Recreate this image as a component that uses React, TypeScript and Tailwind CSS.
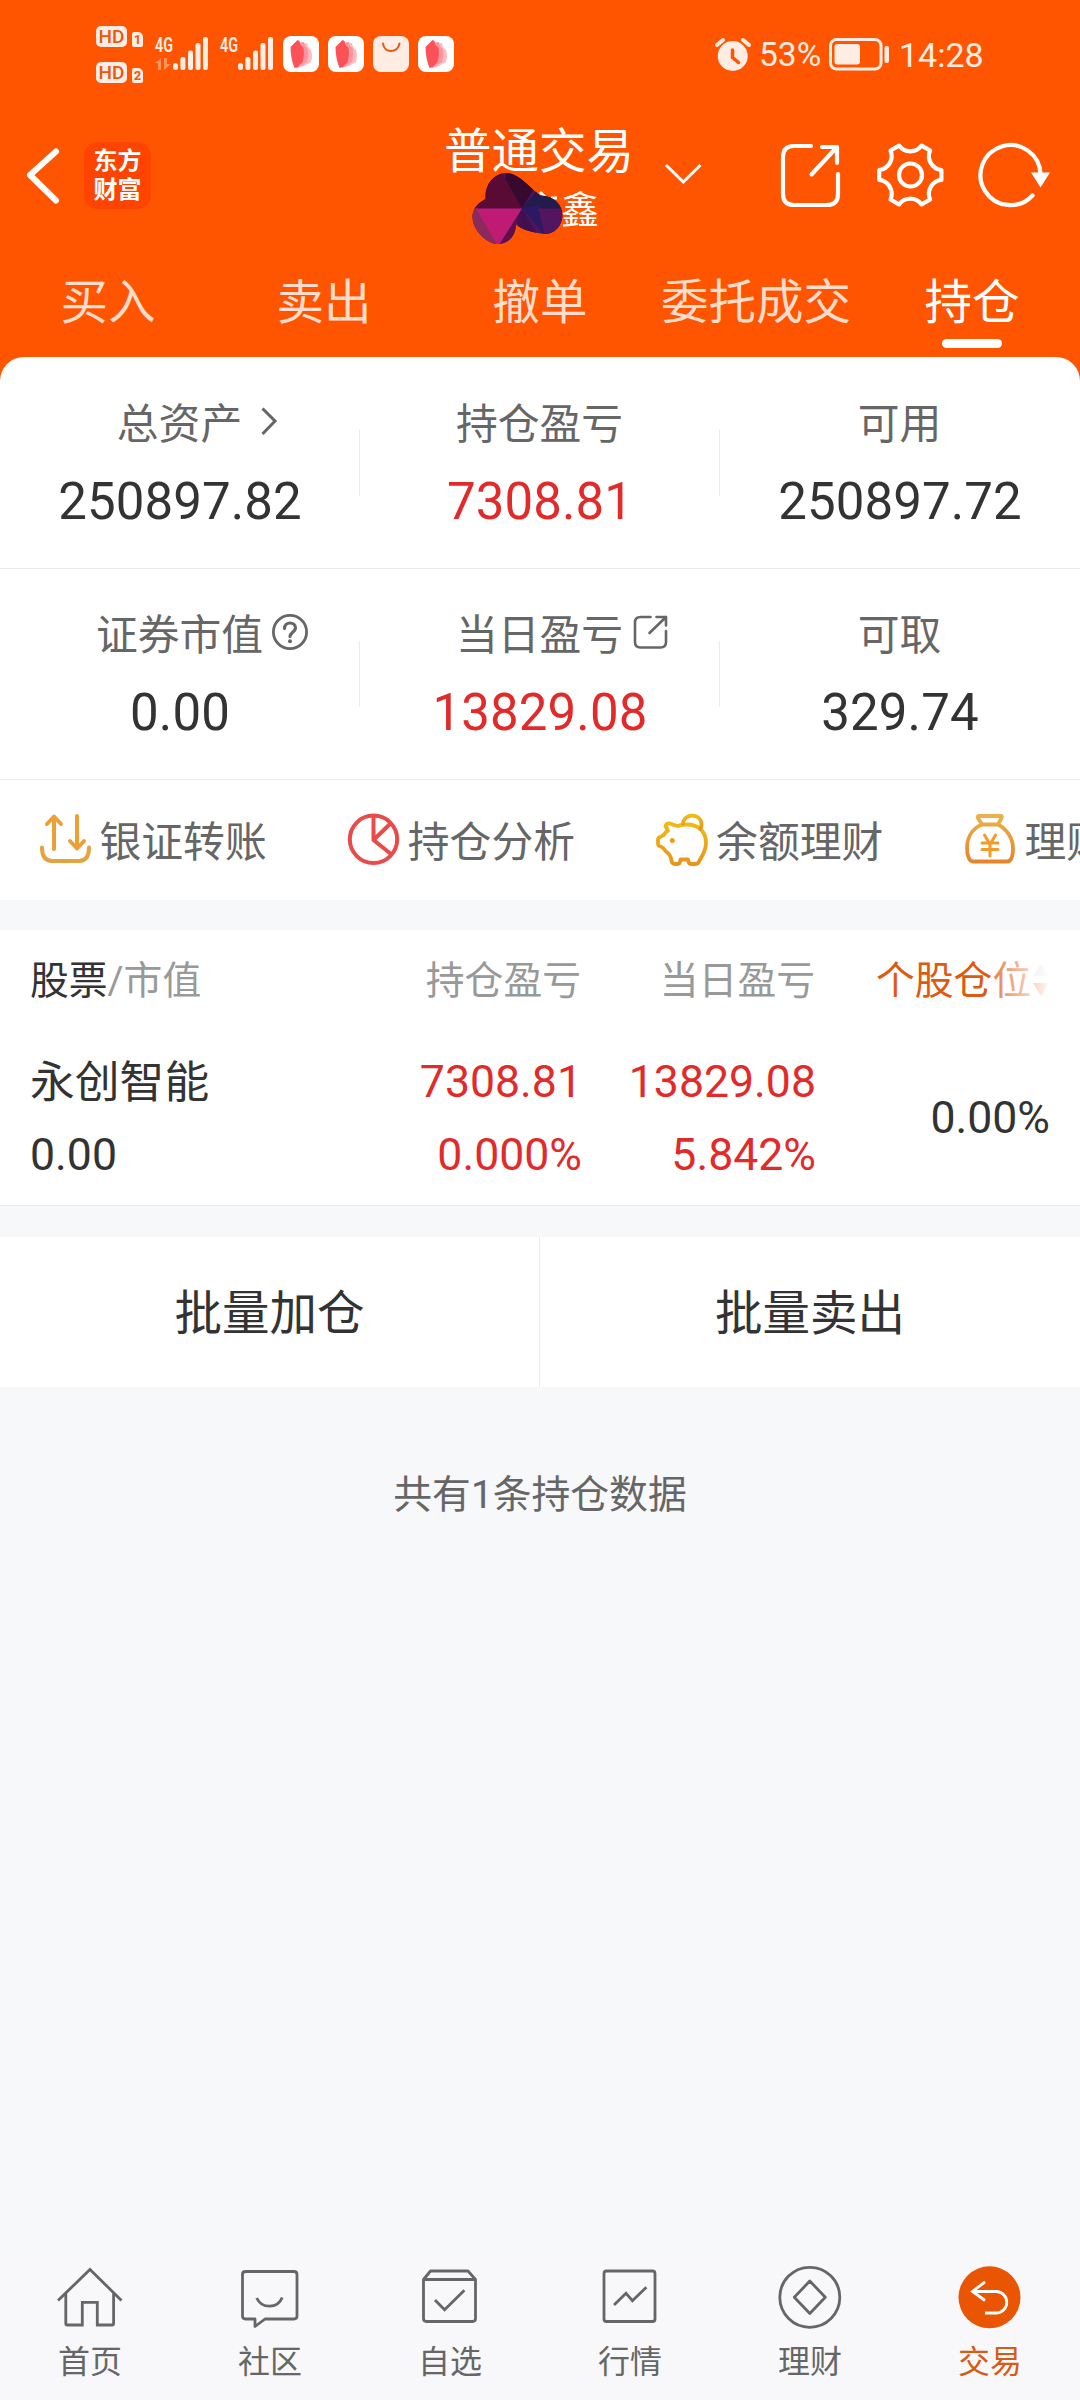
import React from "react";

const CREAM = "#ffede4";

function HdBadge({ n }: { n: string }) {
  return (
    <div className="flex h-[22px] items-end gap-[5px]">
      <div className="flex h-[21px] w-[31px] items-center justify-center rounded-[5px] bg-[#ffede4] text-[19px] leading-none font-medium text-[#e8590c]">
        HD
      </div>
      <div className="flex h-[15px] w-[11px] items-center justify-center rounded-[2px] rounded-tr-[5px] bg-[#ffede4] text-[13px] leading-none font-bold text-[#e8590c]">
        {n}
      </div>
    </div>
  );
}

function Signal({ data }: { data?: boolean }) {
  return (
    <svg className="overflow-visible" width="54" height="46" viewBox="155 26 54 46" fill={CREAM}>
      <text x="155" y="52" fontSize="20" fontWeight="600" textLength="18" lengthAdjust="spacingAndGlyphs">
        4G
      </text>
      {data && (
        <g opacity="0.4">
          <path d="M155 63l6-5v12h-3v-7zM164 58h3v6h4l-7 6z" />
        </g>
      )}
      <rect x="173" y="63" width="5" height="7" rx="2.5" />
      <rect x="180.400" y="57" width="5" height="13" rx="2" />
      <rect x="188" y="50.500" width="5" height="19.500" rx="2" />
      <rect x="195.500" y="43" width="5" height="27" rx="2" />
      <rect x="203" y="37" width="5" height="33" rx="2" />
    </svg>
  );
}

function PetalApp() {
  return (
    <svg width="36" height="36" viewBox="0 0 36 36">
      <rect width="36" height="36" rx="8" fill="#fff" />
      <path d="M20 7.500l4-.5 1 4 3 3q2 6 0 12l-7 4-8 2z" fill="#fdbcc2" />
      <path d="M17 6.500l4-.5 1 4 3 3q1 7-1 13l-6 4-4 2z" fill="#fc959e" />
      <path d="M7.500 11l7-7 2 1 1 4 3 3q1 8-1 14l-5 5-3 1q-4-10-4-21z" fill="#fb5158" />
    </svg>
  );
}

function BagApp() {
  return (
    <svg width="36" height="36" viewBox="0 0 36 36">
      <rect width="36" height="36" rx="8" fill={CREAM} />
      <path d="M10 7.500c1 10 15 10 16.500 0" fill="none" stroke="#e8590c" strokeWidth="2" strokeLinecap="round" />
    </svg>
  );
}

function StatusBar() {
  return (
    <div className="flex h-[110px] items-start pt-[25px] pl-[96px] text-[#ffede4]">
      <div className="flex w-[59px] flex-col gap-[14px]">
        <HdBadge n="1" />
        <HdBadge n="2" />
      </div>
      <div className="flex gap-[11px] pt-[1px]">
        <Signal data />
        <Signal />
      </div>
      <div className="ml-[9px] flex gap-[9px] pt-[11px]">
        <PetalApp />
        <PetalApp />
        <BagApp />
        <PetalApp />
      </div>
      <svg className="mt-[11px] ml-[260px]" width="38" height="38" viewBox="714 36 38 38">
        <circle cx="732.700" cy="56" r="15" fill={CREAM} />
        <path d="M717 45l6-5M749 45l-6-5" stroke={CREAM} strokeWidth="4" strokeLinecap="round" />
        <path d="M732.500 50v7.500l6 5" fill="none" stroke="#ff5500" strokeWidth="3.500" strokeLinecap="round" />
      </svg>
      <span className="mt-[10px] ml-[7px] w-[69px] text-[33.500px] leading-[40px]">53%</span>
      <svg className="mt-[12px]" width="64" height="34" viewBox="828 37 64 34">
        <rect x="830.500" y="39.500" width="50.500" height="29.500" rx="6" fill="none" stroke={CREAM} strokeWidth="3" />
        <rect x="834.500" y="44" width="25.500" height="20.500" rx="3" fill={CREAM} />
        <rect x="884.500" y="46" width="4.500" height="17" rx="2" fill={CREAM} />
      </svg>
      <span className="mt-[10px] ml-[7px] text-[34px] leading-[40px]">14:28</span>
    </div>
  );
}

function gearPath() {
  const pt = (deg: number) => {
    const a = (deg * Math.PI) / 180;
    return `${(31.5 * Math.cos(a)).toFixed(2)} ${(31.5 * Math.sin(a)).toFixed(2)}`;
  };
  let d = `M${pt(-9)}`;
  for (let i = 0; i < 6; i++) {
    d += `L${pt(i * 60 + 9)}A14 14 0 0 0 ${pt(i * 60 + 51)}`;
  }
  return d + "Z";
}

function TitleBar() {
  return (
    <div className="flex h-[140px] pt-[10px]">
      <svg className="mt-[22px] ml-[24px]" width="38" height="66" viewBox="24 142 38 66" fill="none">
        <path d="M56 151.500L30 175l26 25.500" stroke="#fff" strokeWidth="6" strokeLinecap="round" strokeLinejoin="round" />
      </svg>
      <div className="mt-[22px] ml-[22px] flex h-[67px] w-[67px] flex-col items-center justify-center rounded-[14px] bg-[#ff4300] text-[24px] leading-[29px] font-bold text-white">
        <span>东方</span>
        <span>财富</span>
      </div>
      <div className="relative ml-[288px] flex w-[200px] flex-col items-center text-white">
        <div className="mt-[7px] text-[47.500px] leading-[50px]">普通交易</div>
        <div className="mt-[14px] self-end pr-[40px] text-[38px] leading-[38px]">鑫</div>
        <svg className="absolute top-[50px] left-[31px]" width="94" height="78" viewBox="470 170 94 78">
          <defs>
            <clipPath id="blob">
              <path d="M485.500 196C486 180 498 172.500 507 173C519 174 529 187 540 195.500C555 196 562.500 205 562.400 216C562 227 553 234.500 544 234C535 232.500 522 231 516 224C516 236 508 244 498 244C487 244 472 230 472.500 216C473 207 480 202 485.500 199Z" />
            </clipPath>
          </defs>
          <path d="M540 192l5 5M551 198h6" stroke="#fff" strokeWidth="3" />
          <g clipPath="url(#blob)">
            <rect x="470" y="170" width="94" height="78" fill="#4f1460" />
            <path d="M470 170h30l22 38.500h-52z" fill="#5a0b34" />
            <path d="M507 170h38l-23 38.500-17-30z" fill="#350a2e" />
            <path d="M522 208.500l18-22 24 10v12.500z" fill="#211c4c" />
            <path d="M522 208.500l18-4 4 30z" fill="#2b1a63" />
            <path d="M522 208.500l-8 16 26 14z" fill="#42104f" />
            <path d="M538 208.500h26v30h-18z" fill="#53155f" />
            <path d="M470 208.500h8l22 38h-30z" fill="#8b2a5d" />
            <path d="M476 208.500h46l-24 38z" fill="#c01b74" />
            <path d="M518 215l-18 31h16z" fill="#640e48" />
          </g>
        </svg>
      </div>
      <svg className="mt-[40px] ml-[24px]" width="40" height="26" viewBox="664 160 40 26" fill="none">
        <path d="M667 165l17.300 17 17.200-17" stroke="#fff" strokeWidth="3" />
      </svg>
      <svg className="mt-[20px] ml-[75px]" width="276" height="70" viewBox="778 140 276 70" fill="none" stroke="#fff" strokeWidth="4.200" strokeLinecap="round" strokeLinejoin="round">
        <path d="M811 146h-17q-11 0-11 11v37q0 11 11 11h33q11 0 11-11v-20M822 147h15v16M837 147l-25.500 27.500" />
        <path d={gearPath()} transform="translate(910.300 175)" />
        <circle cx="910.500" cy="175" r="11.500" />
        <path d="M1040.500 174A30 30 0 1 0 1032.500 195.500" />
        <path d="M1031 172.500h19l-9.500 15z" fill="#fff" stroke="none" />
      </svg>
    </div>
  );
}

const TABS = ["买入", "卖出", "撤单", "委托成交", "持仓"];

function Tabs() {
  return (
    <div className="grid h-[107px] grid-cols-5 text-[47.500px] leading-[56px]">
      {TABS.map((t, i) => (
        <div key={t} className={i === 4 ? "flex flex-col items-center text-white" : "flex flex-col items-center text-[#ffdccb]"}>
          <span className="mt-[25px] whitespace-nowrap">{t}</span>
          {i === 4 && <span className="mt-[8px] h-[9px] w-[60px] rounded-full bg-white" />}
        </div>
      ))}
    </div>
  );
}

function Chevron() {
  return (
    <svg width="18" height="32" viewBox="260 405 18 32" fill="none">
      <path d="M262.500 408.500l12.500 12.500-12.500 13" stroke="#666" strokeWidth="3" />
    </svg>
  );
}

function Help() {
  return (
    <svg width="38" height="38" viewBox="271 613 38 38" fill="none" stroke="#666" strokeWidth="2.800">
      <circle cx="290" cy="632" r="16.600" />
      <path d="M284.500 628.500c0-7.500 11-7 11-.5c0 4-5.500 4.500-5.500 8.500" strokeWidth="3.200" strokeLinecap="round" />
      <circle cx="290" cy="641.300" r="2" fill="#666" stroke="none" />
    </svg>
  );
}

function OpenSmall() {
  return (
    <svg width="38" height="38" viewBox="632 613 38 38" fill="none" stroke="#666" strokeWidth="2.600" strokeLinecap="round" strokeLinejoin="round">
      <path d="M650.500 617h-10q-5.500 0-5.500 5.500v19.500q0 5.500 5.500 5.500h20q5.500 0 5.500-5.500v-11M656.500 617h9.500v8.500M666 617l-16.500 16" />
    </svg>
  );
}

type Stat = { label: string; value: string; red?: boolean; icon?: React.ReactNode };

const STATS: Stat[][] = [
  [
    { label: "总资产", value: "250897.82", icon: <div className="pl-[18px]"><Chevron /></div> },
    { label: "持仓盈亏", value: "7308.81", red: true },
    { label: "可用", value: "250897.72" },
  ],
  [
    { label: "证券市值", value: "0.00", icon: <div className="pl-[8px]"><Help /></div> },
    { label: "当日盈亏", value: "13829.08", red: true, icon: <div className="pl-[9px]"><OpenSmall /></div> },
    { label: "可取", value: "329.74" },
  ],
];

function StatRow({ row }: { row: Stat[] }) {
  return (
    <div className="grid h-[211px] grid-cols-3 border-b-[1px] border-[#ebebeb]">
      {row.map((s, i) => (
        <div key={s.label} className="relative flex flex-col items-center">
          <div className="relative mt-[42px] mr-[1px] text-[41.800px] leading-[50px] text-[#666]">
            {s.label}
            {s.icon && <div className="absolute -top-[2px] left-full flex h-[45px] items-center">{s.icon}</div>}
          </div>
          <div className={s.red ? "mt-[23px] text-[51px] leading-[58px] tracking-[0.1px] text-[#e12b2b]" : "mt-[23px] text-[51px] leading-[58px] tracking-[0.1px] text-[#333]"}>
            {s.value}
          </div>
          {i < 2 && <div className="absolute top-[72px] right-0 h-[66px] w-px bg-[#ebebeb]" />}
        </div>
      ))}
    </div>
  );
}

const QUICK = [
  {
    label: "银证转账",
    icon: (
      <svg width="60" height="60" viewBox="36 810 60 60" fill="none" stroke="#ec9f35" strokeWidth="4" strokeLinecap="round" strokeLinejoin="round">
        <path d="M54 849v-32M47 824l7-7.500 7 7.500M77 816v32M70 841l7 7.500 7-7.500" />
        <path d="M42 847.500c0 9 3 13.500 10 13.500h27c7 0 10-4.500 10-13.500" stroke="#e3a33f" />
      </svg>
    ),
  },
  {
    label: "持仓分析",
    icon: (
      <svg width="60" height="60" viewBox="344 810 60 60" fill="none" stroke="#ea4a4a" strokeWidth="4" strokeLinejoin="round">
        <circle cx="373.500" cy="839.300" r="23.700" />
        <path d="M373.500 816v24l17.500 14M373.500 840l17-16.500" />
      </svg>
    ),
  },
  {
    label: "余额理财",
    icon: (
      <svg width="60" height="60" viewBox="652 810 60 60" fill="none" stroke="url(#pig)" strokeWidth="3.800" strokeLinecap="round" strokeLinejoin="round">
        <defs>
          <linearGradient id="pig" x1="0" y1="0" x2="0" y2="1">
            <stop offset="0" stopColor="#f2b90f" />
            <stop offset="1" stopColor="#e8941a" />
          </linearGradient>
        </defs>
        <path d="M664.500 826Q665.500 823 669 823.500Q674 825.500 677 826Q680 824.500 686 824.500C698 824.500 705 832 705 843C705 852 700 857 698 861.500Q697 864 694 864H690Q687.500 864 687 859.500H679.500Q679 864 676.500 864H674Q671 864 670.300 860Q670 855 665 851.500Q662 847 658.500 846Q657 845.500 657 843V839.500Q657 837.500 659.500 836.800Q662 836 663.500 834Q665 831.500 667 830.500Z" />
        <path d="M682 823.500C683.500 812.500 699 813.500 700.500 823Q700.800 826 699.500 829" />
        <circle cx="671.300" cy="840.500" r="2.500" fill="#e9a017" stroke="none" />
      </svg>
    ),
  },
  {
    label: "理财",
    icon: (
      <svg width="60" height="60" viewBox="960 810 60 60" fill="none" stroke="url(#bag)" strokeWidth="3.800" strokeLinecap="round" strokeLinejoin="round">
        <defs>
          <linearGradient id="bag" x1="0" y1="0" x2="0" y2="1">
            <stop offset="0" stopColor="#ecb04a" />
            <stop offset="1" stopColor="#e6852a" />
          </linearGradient>
        </defs>
        <path d="M977.500 816h22.500q1.500 0 .5 2l-3.500 6.500h-16l-4-6.500q-.5-2 .5-2zM981 824.500C970 829 966 839 966 848C966 856 968.500 861.500 972 861.500H1006C1010 861.500 1012 856 1012 848C1012 839 1006 829 997 824.500" />
        <path d="M983.500 835l5.500 9.500 5.500-9.500M989 844v12M981 843h16M981 849.500h16" stroke="#f39a2b" strokeWidth="3" />
      </svg>
    ),
  },
];

function QuickBar() {
  return (
    <div className="flex h-[120px] overflow-hidden">
      {QUICK.map((q, i) => (
        <div key={i} className="ml-[36px] flex w-[272.300px] shrink-0 items-start pt-[30px]">
          {q.icon}
          <span className="mt-[3px] ml-[3.500px] text-[41.800px] leading-[60px] whitespace-nowrap text-[#666]">{q.label}</span>
        </div>
      ))}
    </div>
  );
}

function Holdings() {
  return (
    <div className="mt-[30px] flex h-[276px] flex-col border-b border-[#e9eaec] bg-white">
      <div className="mt-[26px] flex h-[50px] pl-[30px] text-[38.800px] leading-[50px] whitespace-nowrap text-[#999]">
        <div className="w-[301px]">
          <span className="text-[#333]">股票</span>/市值
        </div>
        <div className="w-[250px] text-right">持仓盈亏</div>
        <div className="w-[234px] text-right">当日盈亏</div>
        <div className="relative ml-[61px] flex w-[176px] text-[#de5a10]">
          个股仓位
          <svg className="mt-[6px] ml-px" width="18" height="36" viewBox="1032 962 18 36">
            <path d="M1033 976l8-12 8 12z" fill="#ccc" />
            <path d="M1033 983h16l-8 13z" fill="#ea5504" />
          </svg>
          <div className="absolute top-0 right-0 h-full w-[62px] bg-linear-to-r from-white/20 to-white" />
        </div>
      </div>
      <div className="mt-[40px] flex pl-[30px] text-[44.600px] leading-[73px] text-[#333]">
        <div className="w-[301px]">
          <div className="text-[44.800px]">永创智能</div>
          <div>0.00</div>
        </div>
        <div className="w-[251px] text-right text-[#e12b2b]">
          <div>7308.81</div>
          <div>0.000%</div>
        </div>
        <div className="w-[234px] text-right text-[#e12b2b]">
          <div>13829.08</div>
          <div>5.842%</div>
        </div>
        <div className="flex w-[234px] items-center justify-end pb-px">0.00%</div>
      </div>
    </div>
  );
}

const NAV = [
  {
    label: "首页",
    icon: (
      <svg width="72" height="72" viewBox="54 2262 72 72" fill="none" stroke="#666" strokeWidth="2.800">
        <path d="M58 2300.500l32-31 31.500 31M65.800 2293v30.500q0 1.500 1.500 1.500h15v-22.700h15v22.700h14.800q1.500 0 1.500-1.500v-30.500" />
      </svg>
    ),
  },
  {
    label: "社区",
    icon: (
      <svg width="72" height="72" viewBox="234 2262 72 72" fill="none" stroke="#666" strokeWidth="2.800" strokeLinejoin="round">
        <path d="M245.500 2271.500h48.500q3 0 3 3v41.500q0 3-3 3h-29l-10 7.500v-7.500h-9.500q-3 0-3-3v-41.500q0-3 3-3z" />
        <path d="M256.700 2298c5 11 21 11 25.500-.5" />
      </svg>
    ),
  },
  {
    label: "自选",
    icon: (
      <svg width="72" height="72" viewBox="414 2262 72 72" fill="none" stroke="#666" strokeWidth="2.800" strokeLinejoin="round">
        <path d="M423.500 2279.500l7-8.500h37.500l7.500 8.500v39q0 3-3 3h-46q-3 0-3-3zh52" />
        <path d="M435 2300l9.600 9.800 19.800-19.500" strokeLinejoin="miter" />
      </svg>
    ),
  },
  {
    label: "行情",
    icon: (
      <svg width="72" height="72" viewBox="594 2262 72 72" fill="none" stroke="#666" strokeWidth="2.800">
        <rect x="604" y="2271" width="51" height="50.500" rx="2.500" />
        <path d="M614 2305l12-11.700 6.400 7.400 14-13.500" />
      </svg>
    ),
  },
  {
    label: "理财",
    icon: (
      <svg width="72" height="72" viewBox="774 2262 72 72" fill="none" stroke="#666" strokeWidth="2.800" strokeLinejoin="round">
        <circle cx="809.800" cy="2297.300" r="30" />
        <path d="M809.800 2281l15.500 16.300-15.500 16.200-15.500-16.200z" />
      </svg>
    ),
  },
  {
    label: "交易",
    icon: (
      <svg width="72" height="72" viewBox="954 2262 72 72" fill="none" stroke="#fff" strokeWidth="2.800">
        <circle cx="989.500" cy="2297.300" r="31" fill="#ea5504" stroke="none" />
        <path d="M985 2281.800l-12.500 9.700 12.500 9M972.500 2291.500h24.500a10.800 10.800 0 0 1 0 21.500h-12" />
      </svg>
    ),
  },
];

function BottomNav() {
  return (
    <div className="mt-auto grid h-[138px] grid-cols-6 bg-[#f8f8fa]">
      {NAV.map((n, i) => (
        <div key={n.label} className="flex flex-col items-center">
          {n.icon}
          <span className={i === 5 ? "mt-[8px] text-[32px] leading-[40px] text-[#d95a14]" : "mt-[8px] text-[32px] leading-[40px] text-[#666]"}>
            {n.label}
          </span>
        </div>
      ))}
    </div>
  );
}

export default function App() {
  return (
    <div className="flex h-[2400px] w-[1080px] flex-col overflow-hidden bg-[#f7f8fa] font-[Roboto,'Noto_Sans_CJK_SC',sans-serif]">
      <div className="bg-[#ff5500]">
        <StatusBar />
        <TitleBar />
        <Tabs />
        <div className="rounded-t-[24px] bg-white pt-px">
          <StatRow row={STATS[0]} />
          <StatRow row={STATS[1]} />
          <QuickBar />
        </div>
      </div>
      <Holdings />
      <div className="mt-[31px] grid h-[150px] grid-cols-2 bg-white text-center text-[47.500px] leading-[155px] text-[#333]">
        <div className="h-[150px] border-r border-[#ebebeb]">批量加仓</div>
        <div>批量卖出</div>
      </div>
      <div className="mt-[83px] text-center text-[38.800px] leading-[50px] text-[#666]">共有1条持仓数据</div>
      <BottomNav />
    </div>
  );
}
